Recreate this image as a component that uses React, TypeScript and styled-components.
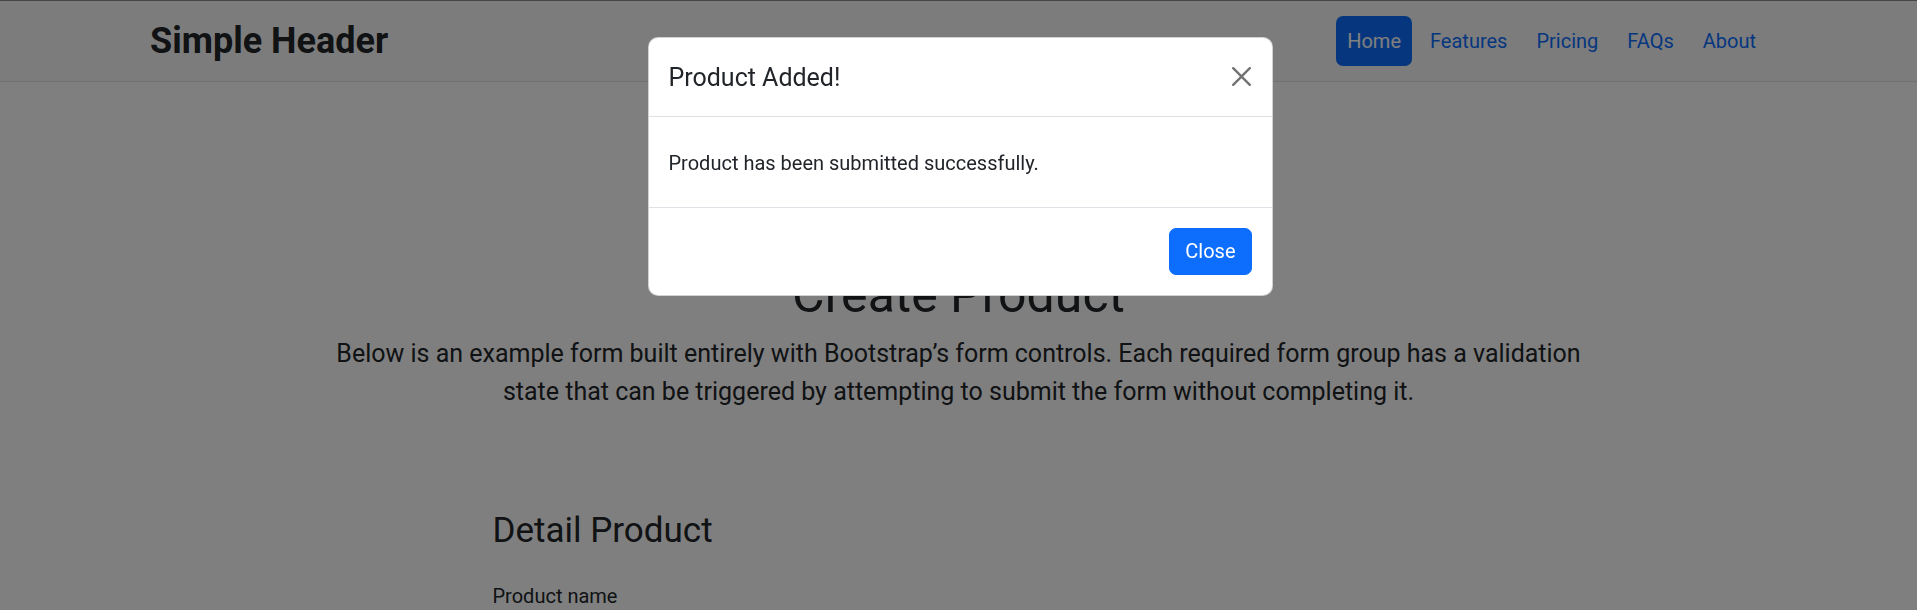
import React from "react";
import styled, { createGlobalStyle } from "styled-components";

const GlobalStyle = createGlobalStyle`
  html, body {
    margin: 0;
    padding: 0;
    overflow: hidden;
    height: 100%;
  }
  body {
    background: #fff;
    color: #212529;
    font-family: Roboto, "Liberation Sans", sans-serif;
    font-size: 20px;
    line-height: 1.5;
  }
  * { box-sizing: border-box; }
`;

const Page = styled.div`
  min-height: 610px;
  border-top: 1px solid #8a8a94;
`;

const Header = styled.header`
  height: 81px;
  background: #f8f9fa;
  border-bottom: 1px solid #dee2e6;
  padding: 0 150px;
  display: flex;
  align-items: center;
  justify-content: space-between;
`;

const Brand = styled.a`
  font-size: 36px;
  font-weight: 700;
  color: #212529;
  text-decoration: none;
  line-height: 1.2;
  margin-top: 2px;
`;

const Nav = styled.nav`
  display: flex;
  align-items: center;
  gap: 7px;
`;

const NavLink = styled.a<{ $active?: boolean }>`
  display: block;
  padding: 10px 11px;
  font-size: 20px;
  line-height: 30px;
  border-radius: 7px;
  text-decoration: none;
  color: ${(p) => (p.$active ? "#fff" : "#0d6efd")};
  background: ${(p) => (p.$active ? "#0d6efd" : "transparent")};
`;

const Main = styled.main`
  padding-top: 183px;
  display: flex;
  flex-direction: column;
  align-items: center;
`;

const Title = styled.h2`
  margin: 0 0 10px;
  font-size: 50px;
  font-weight: 400;
  line-height: 60px;
  text-align: center;
`;

const Lead = styled.p`
  margin: 0;
  max-width: 1262px;
  font-size: 25px;
  line-height: 37.5px;
  font-weight: 400;
  text-align: center;
`;

const FormColumn = styled.section`
  width: 932px;
  padding-top: 100px;
`;

const SectionTitle = styled.h4`
  margin: 0 0 29px;
  font-size: 35px;
  font-weight: 400;
  line-height: 42px;
`;

const Label = styled.label`
  display: block;
  font-size: 20px;
  line-height: 30px;
  margin-bottom: 10px;
`;

const Input = styled.input`
  display: block;
  width: 100%;
  height: 47px;
  border: 1px solid #dee2e6;
  border-radius: 7px;
`;

const Backdrop = styled.div`
  position: fixed;
  inset: 0;
  background: rgba(0, 0, 0, 0.5);
  display: flex;
  justify-content: center;
  align-items: flex-start;
  padding: 37px 0 0 3px;
`;

const Modal = styled.div`
  width: 625px;
  background: #fff;
  border: 1px solid rgba(0, 0, 0, 0.175);
  border-radius: 10px;
  display: flex;
  flex-direction: column;
`;

const ModalHeader = styled.div`
  display: flex;
  align-items: center;
  justify-content: space-between;
  padding: 21px 20px 19px;
  border-bottom: 1px solid #dee2e6;
`;

const ModalTitle = styled.h5`
  margin: 0;
  font-size: 25px;
  font-weight: 400;
  line-height: 37.5px;
`;

const CloseX = styled.button`
  width: 20px;
  height: 20px;
  padding: 0;
  border: 0;
  margin-top: -2px;
  background: transparent;
  opacity: 0.55;
  display: flex;
  align-items: center;
  justify-content: center;
  cursor: pointer;
`;

const ModalBody = styled.div`
  padding: 31px 20px 29px;
  font-size: 20px;
  line-height: 30px;
`;

const ModalFooter = styled.div`
  display: flex;
  justify-content: flex-end;
  padding: 15px;
  border-top: 1px solid #dee2e6;
`;

const PrimaryButton = styled.button`
  margin: 5px;
  height: 47px;
  min-width: 80px;
  padding: 0 15px;
  font-family: inherit;
  font-size: 20px;
  line-height: 30px;
  color: #fff;
  background: #0d6efd;
  border: 1px solid #0d6efd;
  border-radius: 7px;
  cursor: pointer;
`;

export default function App() {
  return (
    <>
      <GlobalStyle />
      <Page>
        <Header>
          <Brand href="#">Simple Header</Brand>
          <Nav>
            <NavLink href="#" $active>Home</NavLink>
            <NavLink href="#">Features</NavLink>
            <NavLink href="#">Pricing</NavLink>
            <NavLink href="#">FAQs</NavLink>
            <NavLink href="#">About</NavLink>
          </Nav>
        </Header>
        <Main>
          <Title>Create Product</Title>
          <Lead>
            Below is an example form built entirely with Bootstrap’s form controls. Each required form group has a
            validation state that can be triggered by attempting to submit the form without completing it.
          </Lead>
          <FormColumn>
            <SectionTitle>Detail Product</SectionTitle>
            <Label htmlFor="pname">Product name</Label>
            <Input id="pname" />
          </FormColumn>
        </Main>
      </Page>
      <Backdrop>
        <Modal role="dialog">
          <ModalHeader>
            <ModalTitle>Product Added!</ModalTitle>
            <CloseX aria-label="Close">
              <svg width="19" height="19" viewBox="0 0 16 16" fill="#000">
                <path d="M.293.293a1 1 0 0 1 1.414 0L8 6.586 14.293.293a1 1 0 1 1 1.414 1.414L9.414 8l6.293 6.293a1 1 0 0 1-1.414 1.414L8 9.414l-6.293 6.293a1 1 0 0 1-1.414-1.414L6.586 8 .293 1.707a1 1 0 0 1 0-1.414" />
              </svg>
            </CloseX>
          </ModalHeader>
          <ModalBody>Product has been submitted successfully.</ModalBody>
          <ModalFooter>
            <PrimaryButton>Close</PrimaryButton>
          </ModalFooter>
        </Modal>
      </Backdrop>
    </>
  );
}
